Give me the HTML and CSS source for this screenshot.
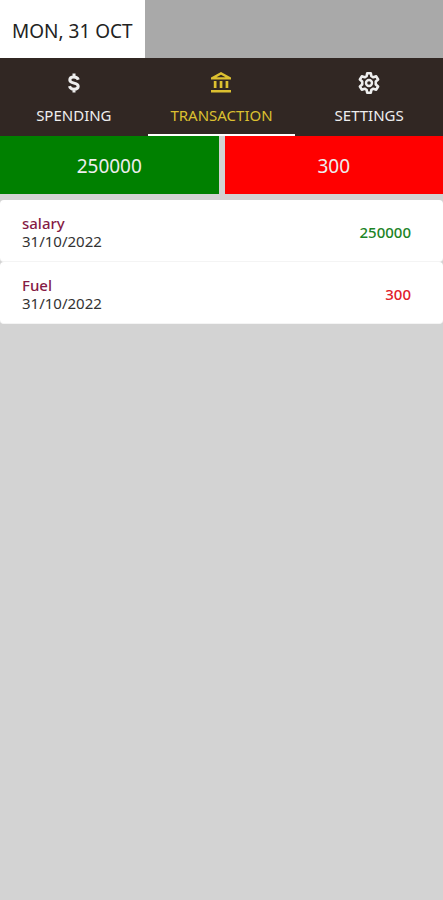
FILE: index.html
```html
<!DOCTYPE html>
<html lang="en">
<head>
    <meta charset="UTF-8">
    <meta name="viewport" content="width=device-width, initial-scale=1.0">
    <title>Transactions</title>
    <link rel="stylesheet" href="styles.css">
</head>
<body>
    <header class="top-bar">
        <button type="button" class="date-button">MON, 31 OCT</button>
    </header>

    <nav class="tabs">
        <a href="#spending" class="tab">
            <svg class="tab-icon" viewBox="0 0 24 24" aria-hidden="true">
                <path d="M16.300 8.700C15.700 7 14.300 6 12 6c-2.400 0-4.200 1.100-4.200 2.900 0 4.200 8.400 2.300 8.400 6.400 0 1.900-1.700 2.900-4.200 2.900-2.400 0-4-1-4.500-3M12 2.500v3.500M12 18v3.500" fill="none" stroke="currentColor" stroke-width="3"/>
            </svg>
            <span>SPENDING</span>
        </a>
        <a href="#transaction" class="tab active">
            <svg class="tab-icon" viewBox="0 0 24 24" aria-hidden="true">
                <path d="M12 1L2 6.500V8.500h20v-2L12 1zm0 2.800l4.500 2.500h-9L12 3.800zM4.800 10v7h2.700v-7zM10.700 10v7h2.700v-7zM16.600 10v7h2.700v-7zM2 19h20v2.500H2z" fill="currentColor" fill-rule="evenodd"/>
            </svg>
            <span>TRANSACTION</span>
        </a>
        <a href="#settings" class="tab">
            <svg class="tab-icon" viewBox="0 0 24 24" aria-hidden="true">
                <path d="M10.200 2.200h3.600l.6 3 1.900 1.100 2.900-1 1.900 3.200-2.300 2v3l2.300 2-1.900 3.200-2.900-1-1.900 1.100-.6 3h-3.600l-.6-3-1.900-1.100-2.900 1-1.900-3.200 2.300-2v-3l-2.300-2 1.900-3.200 2.900 1 1.900-1.100z" fill="none" stroke="currentColor" stroke-width="2.600" stroke-linejoin="round"/>
                <circle cx="12" cy="12" r="3" fill="none" stroke="currentColor" stroke-width="2.400"/>
            </svg>
            <span>SETTINGS</span>
        </a>
    </nav>

    <main>
        <section class="totals">
            <div class="total income">250000</div>
            <div class="total expense">300</div>
        </section>

        <ul class="transactions">
            <li class="transaction">
                <div>
                    <div class="name">salary</div>
                    <div class="date">31/10/2022</div>
                </div>
                <div class="amount amount-in">250000</div>
            </li>
            <li class="transaction">
                <div>
                    <div class="name">Fuel</div>
                    <div class="date">31/10/2022</div>
                </div>
                <div class="amount amount-out">300</div>
            </li>
        </ul>
    </main>
</body>
</html>
```

FILE: styles.css
```css
body {
    font-family: "Noto Sans", "Open Sans", sans-serif;
    background-color: #d3d3d3;
    margin: 0;
}

.top-bar {
    display: flex;
    background-color: #a9a9a9;
}

.date-button {
    background-color: #fff;
    color: #222;
    border: none;
    padding: 18px 12px 14px;
    font-family: inherit;
    font-size: 19px;
    line-height: 26px;
    cursor: pointer;
}

/* tabs */
.tabs {
    display: grid;
    grid-template-columns: repeat(3, 1fr);
    background-color: #312723;
}

.tab {
    display: flex;
    flex-direction: column;
    align-items: center;
    gap: 11px;
    padding: 13px 0 10px;
    border-bottom: 2px solid transparent;
    color: #eee;
    font-size: 15px;
    line-height: 18px;
    text-decoration: none;
}

.tab.active {
    color: #dcc030;
    border-bottom-color: #fff;
}

.tab-icon {
    width: 24px;
    height: 24px;
}

/* totals */
.totals {
    display: grid;
    grid-template-columns: 1fr 1fr;
    gap: 6px;
}

.total {
    padding: 18px 0 16px;
    color: #eee;
    font-size: 19px;
    line-height: 24px;
    text-align: center;
}

.income {
    background-color: #008000;
}

.expense {
    background-color: #f00;
}

/* list */
.transactions {
    list-style: none;
    margin: 6px 0 0;
    padding: 0;
}

.transaction {
    display: flex;
    justify-content: space-between;
    align-items: center;
    padding: 14px 32px 11px 22px;
    background-color: #fff;
    border-bottom: 1px solid #f4f4f4;
    border-radius: 4px;
    font-size: 15px;
    line-height: 18px;
}

.name {
    color: #861b45;
    font-weight: 500;
}

.date {
    color: #333;
}

.amount {
    font-weight: 500;
}

.amount-in {
    color: #1d8426;
}

.amount-out {
    color: #e0202a;
}
```
